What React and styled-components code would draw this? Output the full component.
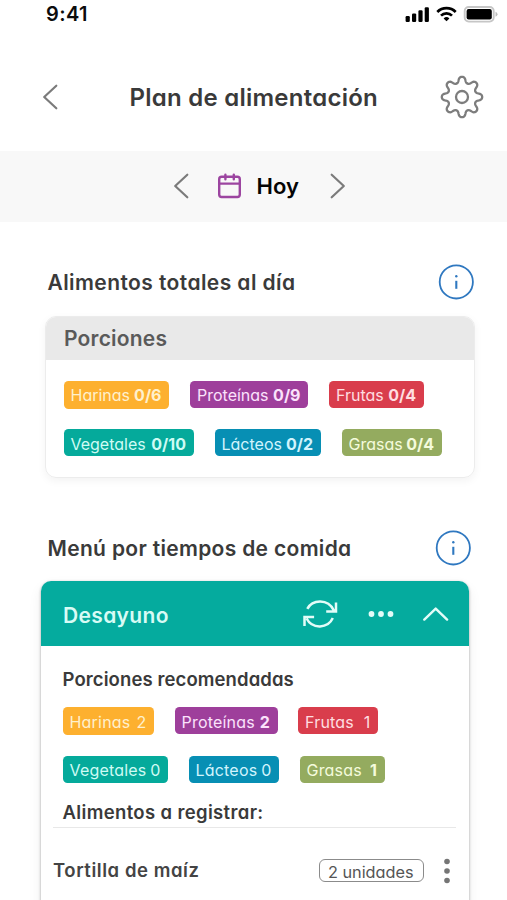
import React from 'react';
import styled, { createGlobalStyle } from 'styled-components';

const Global = createGlobalStyle`
  * { box-sizing: border-box; }
  html, body { margin: 0; background: #fff; overflow: hidden; }
  svg { display: block; flex: none; }
`;

const Screen = styled.div`
  width: 507px;
  height: 900px;
  overflow: hidden;
  display: flex;
  flex-direction: column;
  background: #fff;
  color: #3a3a3a;
  font-family: Inter, 'Open Sans', sans-serif;
  font-feature-settings: 'cv11';
  white-space: nowrap;
`;

const StatusBar = styled.div`
  flex: none;
  display: flex;
  align-items: center;
  justify-content: space-between;
  height: 28px;
  padding: 0 9px 0 46px;
`;

const Clock = styled.span`
  font-size: 20px;
  font-weight: 600;
  letter-spacing: 0.4px;
  line-height: 28px;
  color: #0c0c0c;
`;

const NavBar = styled.header`
  flex: none;
  display: flex;
  align-items: center;
  height: 40px;
  margin: 49px 23px 34px 42px;
`;

const Title = styled.h1`
  flex: 1;
  margin: 0 0 0 71.5px;
  padding-top: 2px;
  font-size: 24px;
  font-weight: 600;
  letter-spacing: 0.25px;
  line-height: 38px;
`;

const DayBar = styled.div`
  flex: none;
  display: flex;
  align-items: center;
  height: 71px;
  padding: 0 0 1px 173px;
  background: #f8f8f8;
`;

const DayLabel = styled.span`
  width: 73px;
  margin-left: 15px;
  font-size: 22px;
  font-weight: 600;
  line-height: 30px;
  color: #050505;
`;

const CalendarSlot = styled.span`
  margin-left: 28.5px;
`;

const SectionHead = styled.div`
  flex: none;
  display: flex;
  align-items: center;
  justify-content: space-between;
  height: 36px;
  margin-top: ${(p) => p.$top}px;
  padding: 0 ${(p) => p.$right}px 0 47.5px;
`;

const SectionTitle = styled.h2`
  margin: 1px 0 0;
  font-size: 21px;
  font-weight: 600;
  letter-spacing: ${(p) => p.$track}px;
  line-height: 36px;
`;

const TotalsCard = styled.section`
  flex: none;
  width: 430px;
  height: 162px;
  margin: 16px 0 0 45px;
  border: 1.5px solid #ececec;
  border-radius: 11px;
  overflow: hidden;
  box-shadow: 0 3px 8px rgba(0, 0, 0, 0.05);
`;

const TotalsHead = styled.h3`
  height: 43px;
  margin: 0;
  padding-left: 18px;
  background: #e9e9e9;
  color: #5a5a5a;
  font-size: 21px;
  font-weight: 600;
  letter-spacing: 0.2px;
  line-height: 43px;
`;

const ChipGroup = styled.div`
  display: flex;
  flex-direction: column;
  gap: 21px;
  padding: ${(p) => p.$pad};
  letter-spacing: ${(p) => (p.$compact ? 0.2 : 0)}px;
`;

const ChipRow = styled.div`
  display: flex;
  align-items: flex-start;
  gap: ${(p) => (p.$compact ? 20.5 : 21)}px;
  height: 27.5px;
`;

const tones = {
  harinas: ['#fdb02f', '#fff0cd'],
  proteinas: ['#9e3f9b', '#fbe2fb'],
  frutas: ['#d93d4c', '#ffdde0'],
  vegetales: ['#05aa9b', '#cffbf4'],
  lacteos: ['#078fb4', '#d2f4fd'],
  grasas: ['#94ab5f', '#f4fbdc'],
};

const Chip = styled.span`
  display: flex;
  align-items: center;
  justify-content: space-between;
  width: ${(p) => p.$w}px;
  height: ${(p) => (p.$tone === 'harinas' ? 28 : 27)}px;
  padding: ${(p) => (p.$tone === 'harinas' ? 1 : 2)}px 7.5px 0 7px;
  border-radius: 4.5px;
  background: ${(p) => tones[p.$tone][0]};
  color: ${(p) => tones[p.$tone][1]};
  font-size: 16px;
  line-height: 24px;
`;

const Count = styled.b`
  font-weight: ${(p) => (p.$light ? 400 : 650)};
`;

const MealCard = styled.section`
  flex: none;
  width: 428px;
  height: 340px;
  margin: 15px 0 0 41px;
  border-radius: 10px 10px 0 0;
  background: #fff;
  box-shadow: 0 1px 3px rgba(0, 0, 0, 0.36), 0 6px 14px rgba(0, 0, 0, 0.07);
`;

const MealHead = styled.div`
  display: flex;
  align-items: center;
  height: 65px;
  padding: 0 20px 0 22px;
  border-radius: 10px 10px 0 0;
  background: #05ab9e;
`;

const MealName = styled.h3`
  flex: 1;
  margin: 3px 0 0;
  color: #d8fbf5;
  font-size: 21px;
  font-weight: 600;
  letter-spacing: 0.35px;
`;

const MealActions = styled.div`
  display: flex;
  align-items: center;
  gap: 29.5px;
`;

const Label = styled.h4`
  height: 26px;
  margin: ${(p) => p.$top}px 0 0 21.5px;
  font-size: 18.5px;
  font-weight: 600;
  letter-spacing: ${(p) => p.$track}px;
  line-height: 26px;
`;

const FoodRow = styled.div`
  display: flex;
  align-items: center;
  height: 86px;
  margin: 2px 13px 0 12px;
  padding-right: 5px;
  border-top: 1px solid #e8e8e8;
`;

const FoodName = styled.span`
  flex: 1;
  margin-top: -2px;
  font-size: 18.5px;
  font-weight: 600;
  letter-spacing: 0.55px;
  color: #444;
`;

const Units = styled.span`
  width: 105px;
  height: 23px;
  margin: 0 19px 0 0;
  padding: 1px 1.5px 0 0;
  border: 1.3px solid #8b8b8b;
  border-radius: 6px;
  color: #555;
  font-size: 16.3px;
  line-height: 22px;
  text-align: center;
`;

function Chevron({ dir }) {
  const d = {
    left: 'M14.3 1.7 2.2 13l12.1 11.3',
    right: 'M1.7 1.7 13.8 13 1.7 24.3',
  }[dir];
  return (
    <svg width="16" height="26" viewBox="0 0 16 26" fill="none" stroke="#7b7b7b" strokeWidth="2.2" strokeLinecap="round" strokeLinejoin="round">
      <path d={d} />
    </svg>
  );
}

const gearPath = Array.from({ length: 192 }, (_, i) => {
  const t = (i / 192) * Math.PI * 2;
  const a = t + 0.026 * Math.sin(16 * t);
  const r = 17.3 + 2.9 * Math.cos(8 * t);
  return `${i ? 'L' : 'M'}${(22 + r * Math.sin(a)).toFixed(2)} ${(22 - r * Math.cos(a)).toFixed(2)}`;
}).join('') + 'Z';

function Gear() {
  return (
    <svg width="44" height="44" viewBox="0 0 44 44" fill="none" stroke="#7d7d7d" strokeWidth="2.3" strokeLinejoin="round">
      <path d={gearPath} />
      <circle cx="22" cy="22" r="6" />
    </svg>
  );
}

function StatusIcons() {
  return (
    <svg width="93" height="20" viewBox="405 4 93 20">
      <rect x="405.6" y="16" width="4.2" height="6" rx="1.2" />
      <rect x="412" y="13.4" width="4.2" height="8.6" rx="1.2" />
      <rect x="418.4" y="10.2" width="4.2" height="11.8" rx="1.2" />
      <rect x="424.7" y="7.2" width="4.2" height="14.8" rx="1.2" />
      <g fill="none" stroke="#000" strokeWidth="2.7">
        <path d="M437.3 12a13 13 0 0 1 18.4 0" />
        <path d="M441 15.6a7.8 7.8 0 0 1 11 0" />
      </g>
      <path d="M443.6 18.4a4.2 4.2 0 0 1 5.8 0l-2.9 2.9z" />
      <rect x="464.7" y="7" width="29" height="14.6" rx="4" fill="none" stroke="#c6c6c6" strokeWidth="1.9" />
      <rect x="466.6" y="9" width="25.2" height="10.6" rx="2" />
      <path d="M495.5 11.8q2 .8 2 2.5t-2 2.5z" fill="#bdbdbd" />
    </svg>
  );
}

function Calendar() {
  return (
    <svg width="24" height="26" viewBox="0 0 24 26" fill="none" stroke="#9c45a0" strokeWidth="2.4" strokeLinecap="round">
      <rect x="1.2" y="3.8" width="20.6" height="20.2" rx="2.4" />
      <path d="M1.5 10.6h20M7.4 1.8v4.4M15.8 1.8v4.4" />
    </svg>
  );
}

function Info() {
  return (
    <svg width="36" height="36" viewBox="0 0 36 36" fill="none" stroke="#2f78c0" strokeWidth="1.8">
      <circle cx="18.3" cy="17.9" r="16.6" />
      <path d="M18.3 16.8v8" strokeWidth="2.1" />
      <circle cx="18.3" cy="12.3" r="1.2" fill="#2f78c0" stroke="none" />
    </svg>
  );
}

function Refresh() {
  return (
    <svg width="36" height="30" viewBox="302 598.5 36 30" fill="none" stroke="#e3fcf8" strokeWidth="2.5">
      <path d="M307.3 608.4c5-9.4 20.6-10.6 26.6 1.6M336 602v9.1h-9.8" />
      <path d="M332.8 617.6c-4.8 10.6-20.6 11.4-26.2.4M304.5 625.4v-9h9.6" />
    </svg>
  );
}

function Dots() {
  return (
    <svg width="26" height="8" viewBox="0 0 26 8" fill="#e3fcf8">
      <circle cx="3.5" cy="4" r="2.9" />
      <circle cx="13" cy="4" r="2.9" />
      <circle cx="22.5" cy="4" r="2.9" />
    </svg>
  );
}

function Collapse() {
  return (
    <svg width="26" height="16" viewBox="0 0 26 16" fill="none" stroke="#e3fcf8" strokeWidth="2.4" strokeLinecap="round" strokeLinejoin="round">
      <path d="M1.3 13.6 12.7 2.6l11.4 11" />
    </svg>
  );
}

function MoreVertical() {
  return (
    <svg width="8" height="26" viewBox="0 0 8 26" fill="#757575">
      <circle cx="4" cy="3.5" r="2.8" />
      <circle cx="4" cy="13" r="2.8" />
      <circle cx="4" cy="22.5" r="2.8" />
    </svg>
  );
}

function Portions({ rows, pad, compact }) {
  return (
    <ChipGroup $pad={pad} $compact={compact}>
      {rows.map((row, i) => (
        <ChipRow key={i} $compact={compact}>
          {row.map(([tone, name, count, width, light]) => (
            <Chip key={tone} $tone={tone} $w={width}>
              <span>{name}</span> <Count $light={light}>{count}</Count>
            </Chip>
          ))}
        </ChipRow>
      ))}
    </ChipGroup>
  );
}

const totals = [
  [
    ['harinas', 'Harinas', '0/6', 105.5],
    ['proteinas', 'Proteínas', '0/9', 118],
    ['frutas', 'Frutas', '0/4', 94.5],
  ],
  [
    ['vegetales', 'Vegetales', '0/10', 130],
    ['lacteos', 'Lácteos', '0/2', 106],
    ['grasas', 'Grasas', '0/4', 100],
  ],
];

const breakfast = [
  [
    ['harinas', 'Harinas', '2', 91.5, true],
    ['proteinas', 'Proteínas', '2', 103],
    ['frutas', 'Frutas', '1', 80, true],
  ],
  [
    ['vegetales', 'Vegetales', '0', 105.5, true],
    ['lacteos', 'Lácteos', '0', 90.5, true],
    ['grasas', 'Grasas', '1', 85],
  ],
];

export default function App() {
  return (
    <Screen>
      <Global />
      <StatusBar>
        <Clock>9:41</Clock>
        <StatusIcons />
      </StatusBar>
      <NavBar>
        <Chevron dir="left" />
        <Title>Plan de alimentación</Title>
        <Gear />
      </NavBar>
      <DayBar>
        <Chevron dir="left" />
        <CalendarSlot><Calendar /></CalendarSlot>
        <DayLabel>Hoy</DayLabel>
        <Chevron dir="right" />
      </DayBar>
      <SectionHead $top={42} $right={33}>
        <SectionTitle $track={0.42}>Alimentos totales al día</SectionTitle>
        <Info />
      </SectionHead>
      <TotalsCard>
        <TotalsHead>Porciones</TotalsHead>
        <Portions rows={totals} pad="20.5px 0 0 17.5px" />
      </TotalsCard>
      <SectionHead $top={52} $right={36}>
        <SectionTitle $track={0.32}>Menú por tiempos de comida</SectionTitle>
        <Info />
      </SectionHead>
      <MealCard>
        <MealHead>
          <MealName>Desayuno</MealName>
          <MealActions>
            <Refresh />
            <Dots />
            <Collapse />
          </MealActions>
        </MealHead>
        <Label $top={20} $track={0.1}>Porciones recomendadas</Label>
        <Portions compact rows={breakfast} pad="15px 0 0 21.5px" />
        <Label $top={16} $track={0.35}>Alimentos a registrar:</Label>
        <FoodRow>
          <FoodName>Tortilla de maíz</FoodName>
          <Units>2 unidades</Units>
          <MoreVertical />
        </FoodRow>
      </MealCard>
    </Screen>
  );
}
